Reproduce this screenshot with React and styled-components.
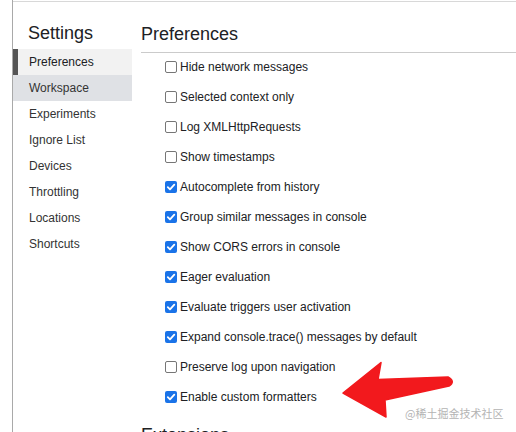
import React from 'react'
import styled, { createGlobalStyle } from 'styled-components'

const GlobalStyle = createGlobalStyle`
  html, body {
    margin: 0;
    padding: 0;
    background: #fff;
    overflow: hidden;
  }
  body {
    font-family: "Liberation Sans", Arial, sans-serif;
  }
`

const Page = styled.div`
  position: relative;
  width: 516px;
  height: 432px;
  overflow: hidden;
`

const Frame = styled.div`
  margin-left: 12px;
  height: 432px;
  border-left: 1px solid #a9a9a9;
  display: flex;
  flex-direction: column;
`

const Panel = styled.div`
  margin-top: 1px;
  border-top: 1px solid #d8d8d8;
  display: flex;
  flex: 1;
  min-height: 0;
`

const Sidebar = styled.div`
  width: 119px;
  flex-shrink: 0;
`

const SidebarTitle = styled.div`
  padding: 20px 0 5px 15px;
  font-size: 18px;
  line-height: 22px;
  color: #202124;
`

const NavItem = styled.div`
  height: 26px;
  line-height: 26px;
  font-size: 12px;
  padding-left: ${p => (p.$selected ? '11px' : '16px')};
  border-left: ${p => (p.$selected ? '5px solid #555' : 'none')};
  background: ${p => (p.$selected ? '#f2f2f2' : p.$hover ? '#dfe1e5' : 'transparent')};
  color: ${p => (p.$selected ? '#202124' : '#333')};
`

const Main = styled.div`
  flex: 1;
  min-width: 0;
  margin-left: 9px;
`

const Heading = styled.div`
  padding: 21px 0 7px 0;
  font-size: 18px;
  line-height: 22px;
  color: #202124;
  border-bottom: 1px solid #cbcbcb;
`

const SectionHeading = styled.div`
  margin-top: 11px;
  font-size: 18px;
  line-height: 22px;
  color: #202124;
`

const List = styled.div`
  padding-left: 24px;
`

const Row = styled.label`
  display: flex;
  align-items: center;
  height: 30px;
  padding-bottom: 3px;
  box-sizing: border-box;
  font-size: 12px;
  color: #202124;
  white-space: nowrap;
`

const Box = styled.span`
  width: 12px;
  height: 12px;
  box-sizing: border-box;
  border-radius: 2px;
  flex-shrink: 0;
  display: flex;
  align-items: center;
  justify-content: center;
  background: ${p => (p.$checked ? '#1a73e8' : '#fff')};
  border: ${p => (p.$checked ? 'none' : '1px solid #767676')};
`

const Label = styled.span`
  margin-left: 3px;
  line-height: 14px;
`

const Arrow = styled.svg`
  position: absolute;
  left: 340px;
  top: 358px;
`

const Watermark = styled.div`
  position: absolute;
  left: 405px;
  top: 405px;
  font-family: "Noto Sans CJK SC", "Liberation Sans", sans-serif;
  font-size: 11px;
  line-height: 16px;
  color: #b4b4b4;
  text-shadow: 0 0 1px #fff;
`

const navItems = [
  'Preferences',
  'Workspace',
  'Experiments',
  'Ignore List',
  'Devices',
  'Throttling',
  'Locations',
  'Shortcuts'
]

const options = [
  ['Hide network messages', false],
  ['Selected context only', false],
  ['Log XMLHttpRequests', false],
  ['Show timestamps', false],
  ['Autocomplete from history', true],
  ['Group similar messages in console', true],
  ['Show CORS errors in console', true],
  ['Eager evaluation', true],
  ['Evaluate triggers user activation', true],
  ['Expand console.trace() messages by default', true],
  ['Preserve log upon navigation', false],
  ['Enable custom formatters', true]
]

const Check = () => (
  <svg width="10" height="10" viewBox="0 0 10 10">
    <path d="M1.8 5.2 L4 7.4 L8.3 2.6" fill="none" stroke="#fff" strokeWidth="1.8" strokeLinecap="round" strokeLinejoin="round" />
  </svg>
)

export default function App () {
  return (
    <Page>
      <GlobalStyle />
      <Frame>
        <Panel>
          <Sidebar>
            <SidebarTitle>Settings</SidebarTitle>
            {navItems.map((name, i) => (
              <NavItem key={name} $selected={i === 0} $hover={i === 1}>
                {name}
              </NavItem>
            ))}
          </Sidebar>
          <Main>
            <Heading>Preferences</Heading>
            <List>
              {options.map(([text, checked]) => (
                <Row key={text}>
                  <Box $checked={checked}>{checked && <Check />}</Box>
                  <Label>{text}</Label>
                </Row>
              ))}
            </List>
            <SectionHeading>Extensions</SectionHeading>
          </Main>
        </Panel>
      </Frame>
      <Arrow width="120" height="62" viewBox="0 0 120 62">
        <path
          d="M3 35 L41 4.5 L38 21.5 L108 19 Q116 23.5 109 28 L45 42 L46 59 Z"
          fill="#f2191d"
          stroke="#f2191d"
          strokeWidth="1.5"
          strokeLinejoin="round"
        />
      </Arrow>
      <Watermark>@稀土掘金技术社区</Watermark>
    </Page>
  )
}
